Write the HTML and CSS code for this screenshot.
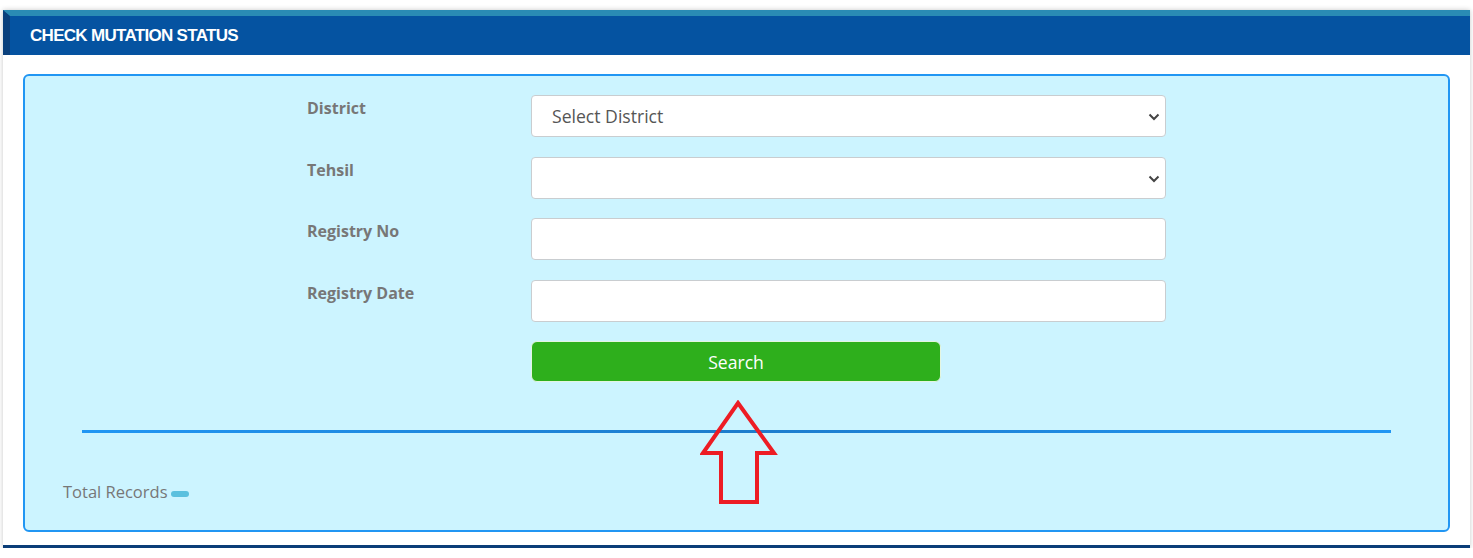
FILE: index.html
```html
<!DOCTYPE html>
<html lang="en">
<head>
<meta charset="utf-8">
<title>Check Mutation Status</title>
<link rel="stylesheet" href="styles.css">
</head>
<body>
<div class="page">
  <div class="card">
    <div class="card-header">CHECK MUTATION STATUS</div>
    <div class="card-body">
      <div class="panel">
        <form class="form">
          <div class="row">
            <label class="label">District</label>
            <div class="control">
              <select class="field select">
                <option>Select District</option>
              </select>
              <svg class="chev" width="12" height="8" viewBox="0 0 12 8"><path d="M1.5 1.5 L6 6 L10.5 1.5" fill="none" stroke="#444" stroke-width="2"/></svg>
            </div>
          </div>
          <div class="row">
            <label class="label">Tehsil</label>
            <div class="control">
              <select class="field select">
                <option></option>
              </select>
              <svg class="chev" width="12" height="8" viewBox="0 0 12 8"><path d="M1.5 1.5 L6 6 L10.5 1.5" fill="none" stroke="#444" stroke-width="2"/></svg>
            </div>
          </div>
          <div class="row">
            <label class="label">Registry No</label>
            <div class="control"><input class="field" type="text"></div>
          </div>
          <div class="row">
            <label class="label">Registry Date</label>
            <div class="control"><input class="field" type="text"></div>
          </div>
          <div class="row">
            <span class="label"></span>
            <button type="button" class="btn">Search</button>
          </div>
        </form>
        <div class="divider"></div>
        <div class="total">Total Records <span class="badge"></span></div>
        <svg class="arrow" width="80" height="108" viewBox="0 0 80 108">
          <polygon points="38,3 74,53 57,53 57,102 21,102 21,53 3,53" fill="none" stroke="#ed1c24" stroke-width="4" stroke-linejoin="miter"/>
        </svg>
      </div>
    </div>
  </div>
</div>
</body>
</html>
```

FILE: styles.css
```css
html, body {
  margin: 0;
  padding: 0;
  background: #ffffff;
}

.page {
  padding: 10px 3px 0 3px;
}

.card {
  background: #ffffff;
  border-bottom: 3px solid #0b3d78;
  box-shadow: 0 0 5px rgba(0, 0, 0, 0.22);
}

.card-header {
  height: 45px;
  box-sizing: border-box;
  background: #0553a1;
  border-top: 6px solid #2a8bb4;
  border-left: 7px solid #0a407c;
  padding-left: 20px;
  padding-top: 1px;
  display: flex;
  align-items: center;
  color: #ffffff;
  font-family: "Liberation Sans", Arial, sans-serif;
  font-weight: 700;
  font-size: 17px;
  letter-spacing: -0.7px;
}

.card-body {
  padding: 19px 20px 13px 20px;
}

.panel {
  position: relative;
  background: #ccf4ff;
  border: 2px solid #2196f3;
  border-radius: 6px;
  padding: 19px 0 26px 0;
  font-family: "Open Sans", sans-serif;
}

.form {
  display: flex;
  flex-direction: column;
  gap: 19.5px;
  padding-left: 282px;
}

.row {
  display: flex;
  align-items: flex-start;
}

.label {
  width: 224px;
  flex: none;
  font-size: 16px;
  font-weight: 700;
  color: #777777;
  line-height: 22px;
  padding-top: 2px;
}

.control {
  position: relative;
  width: 635px;
}

.field {
  display: block;
  width: 635px;
  height: 42px;
  box-sizing: border-box;
  border: 1px solid #c9cdd0;
  border-radius: 4px;
  background: #ffffff;
  font-family: "Open Sans", sans-serif;
  font-size: 17.6px;
  color: #555555;
  padding: 0 20px;
  outline: none;
}

.select {
  appearance: none;
  -webkit-appearance: none;
}

.chev {
  position: absolute;
  right: 6px;
  top: 18px;
}

.btn {
  width: 410px;
  height: 41px;
  border: 1px solid #e4f5e0;
  border-radius: 6px;
  background: #2eaf1c;
  color: #ffffff;
  font-family: "Open Sans", sans-serif;
  font-size: 17.6px;
  padding: 0;
  cursor: pointer;
}

.divider {
  height: 3px;
  margin: 48px 57px 0 57px;
  background: linear-gradient(to right, #2196f3, #1d7ccc 50%, #2196f3);
}

.total {
  margin-top: 47px;
  padding-left: 38px;
  font-size: 16.5px;
  line-height: 24px;
  color: #777777;
  display: flex;
  align-items: center;
  gap: 3px;
}

.badge {
  display: inline-block;
  width: 18px;
  height: 6px;
  border-radius: 4px;
  background: #5bc0de;
  margin-top: 4px;
}

.arrow {
  position: absolute;
  left: 675px;
  top: 324px;
}
```
